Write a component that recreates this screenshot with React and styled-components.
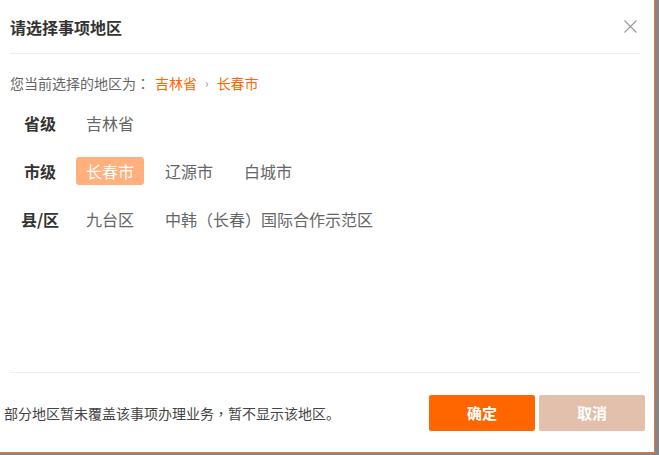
import React from "react";
import styled, { createGlobalStyle } from "styled-components";

const Global = createGlobalStyle`
  html, body { margin: 0; padding: 0; }
  body {
    background: #858585;
    font-family: "Noto Sans CJK SC", "Noto Sans", sans-serif;
  }
`;

const Dialog = styled.div`
  width: 654px;
  height: 452px;
  background: #fff;
  border-right: 1px solid #e9782c;
  border-bottom: 1px solid #e9782c;
  display: flex;
  flex-direction: column;
`;

const Header = styled.div`
  height: 53px;
  margin: 0 14px 0 10px;
  border-bottom: 1px solid #eeeeee;
  display: flex;
  align-items: center;
  justify-content: space-between;
`;

const Title = styled.h2`
  margin: 0;
  font-size: 16px;
  font-weight: bold;
  color: #333;
  line-height: 20px;
`;

const Close = styled.button`
  border: 0;
  background: none;
  padding: 0;
  margin-right: 3px;
  width: 13px;
  height: 13px;
  display: flex;
  cursor: pointer;
`;

const Body = styled.div`
  flex: 1;
  padding-left: 10px;
  display: flex;
  flex-direction: column;
`;

const Current = styled.div`
  margin-top: 19px;
  height: 20px;
  line-height: 20px;
  font-size: 14px;
  color: #666;
  display: flex;
  align-items: center;
`;

const Punct = styled.span`
  font-family: "Noto Sans CJK TC", "Noto Sans CJK SC", sans-serif;
`;

const Crumb = styled.span`
  color: #ff6600;
  margin-left: ${(p) => (p.$first ? "5px" : "0")};
`;

const Sep = styled.span`
  color: #999;
  font-size: 12px;
  margin: 0 8px;
`;

const Rows = styled.div`
  margin-top: 16px;
  display: flex;
  flex-direction: column;
  gap: 20px;
`;

const Row = styled.div`
  display: flex;
  align-items: center;
  height: 28px;
`;

const Label = styled.div`
  width: 60px;
  text-align: center;
  font-size: 16px;
  font-weight: bold;
  color: #333;
`;

const Items = styled.div`
  margin-left: 6px;
  display: flex;
  gap: 11px;
`;

const Item = styled.span`
  height: 28px;
  line-height: 28px;
  padding: 0 10px;
  border-radius: 3px;
  font-size: 16px;
  color: ${(p) => (p.$active ? "#fff" : "#666")};
  background: ${(p) => (p.$active ? "#ffb07c" : "transparent")};
  cursor: pointer;
`;

const Divider = styled.div`
  margin: 0 14px 0 10px;
  border-top: 1px solid #eeeeee;
`;

const Footer = styled.div`
  height: 79px;
  padding: 0 9px 0 4px;
  display: flex;
  align-items: center;
  justify-content: space-between;
`;

const Note = styled.p`
  margin: 0;
  font-size: 14px;
  color: #444;
`;

const Buttons = styled.div`
  display: flex;
  gap: 4px;
`;

const Button = styled.button`
  width: 106px;
  height: 36px;
  border: 0;
  border-radius: 2px;
  font-family: inherit;
  font-size: 15px;
  font-weight: bold;
  color: #fff;
  background: ${(p) => (p.$primary ? "#ff6600" : "#e2c0ab")};
  cursor: pointer;
`;

const withPunct = (text) =>
  text.split(/([（），：])/).map((part, i) =>
    /^[（），：]$/.test(part) ? <Punct key={i}>{part}</Punct> : part
  );

const rows = [
  { label: "省级", items: ["吉林省"] },
  { label: "市级", items: ["长春市", "辽源市", "白城市"], active: 0 },
  { label: "县/区", items: ["九台区", "中韩（长春）国际合作示范区"] },
];

export default function App() {
  return (
    <>
      <Global />
      <Dialog>
        <Header>
          <Title>请选择事项地区</Title>
          <Close aria-label="关闭">
            <svg width="13" height="13" viewBox="0 0 13 13">
              <path d="M0.5 0.5L12.5 12.5M12.5 0.5L0.5 12.5" stroke="#999" strokeWidth="1.1" />
            </svg>
          </Close>
        </Header>
        <Body>
          <Current>
            {withPunct("您当前选择的地区为：")}
            <Crumb $first>吉林省</Crumb>
            <Sep>›</Sep>
            <Crumb>长春市</Crumb>
          </Current>
          <Rows>
            {rows.map((r) => (
              <Row key={r.label}>
                <Label>{r.label}</Label>
                <Items>
                  {r.items.map((it, i) => (
                    <Item key={it} $active={r.active === i}>
                      {withPunct(it)}
                    </Item>
                  ))}
                </Items>
              </Row>
            ))}
          </Rows>
        </Body>
        <Divider />
        <Footer>
          <Note>{withPunct("部分地区暂未覆盖该事项办理业务，暂不显示该地区。")}</Note>
          <Buttons>
            <Button $primary>确定</Button>
            <Button>取消</Button>
          </Buttons>
        </Footer>
      </Dialog>
    </>
  );
}
